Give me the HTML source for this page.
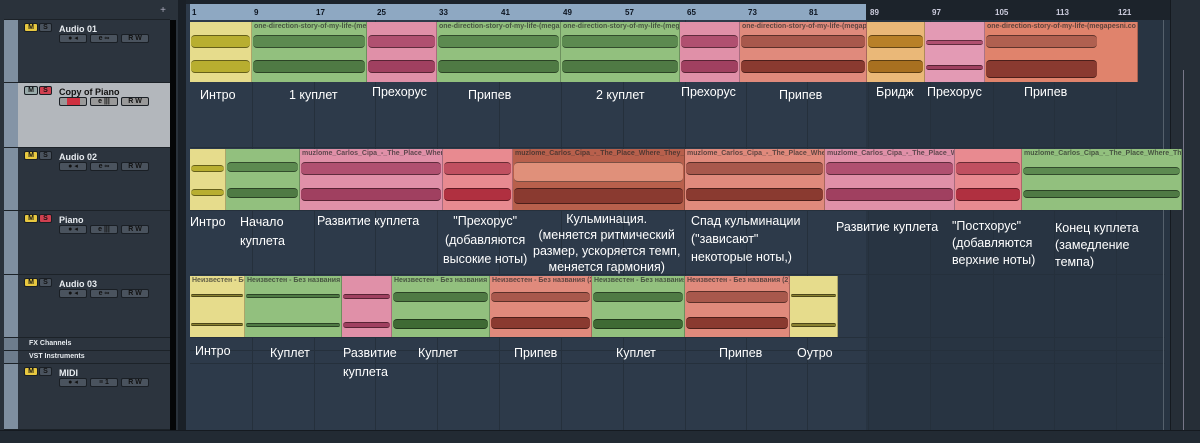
<!DOCTYPE html>
<html><head><meta charset="utf-8"><style>
*{margin:0;padding:0;box-sizing:border-box}
body{width:1200px;height:443px;overflow:hidden;background:#1f262e;font-family:"Liberation Sans","DejaVu Sans",sans-serif;position:relative}
.a{position:absolute}
#left{left:0;top:0;width:178px;height:443px;background:#2a323b}
.trk{position:absolute;left:4px;width:166px;border-bottom:1px solid #1c2228;background:#2c343e}
.num{position:absolute;left:0;top:0;width:14px;height:100%;background:#7f8fa0}
.tn{position:absolute;left:55px;top:4px;font-size:9px;font-weight:bold;color:#e8ecf0}
.btn{position:absolute;height:9px;background:#4a535e;border:1px solid #1a1f25;border-radius:2px;font-size:7px;font-weight:bold;color:#111;text-align:center;line-height:7px}
.meter{position:absolute;left:170px;width:6px;background:#050607}
#tl{left:186px;top:0;width:984px;height:430px;background:#2d3a4a}
.vl{position:absolute;top:20px;width:1px;height:410px;background:#25303c}
.hl{position:absolute;left:190px;width:975px;height:1px;background:#25303c}
.ruler{position:absolute;top:4px;height:16px}
.bn{position:absolute;top:8px;font-size:8px;font-weight:bold;color:#0c1420}
.clip{position:absolute;overflow:hidden;border-right:1px solid rgba(0,0,0,.25)}
.clip b{position:absolute;left:2px;top:1px;font-size:7px;font-weight:bold;white-space:nowrap;color:rgba(40,40,40,.7)}
.w{position:absolute;left:1px;right:1px;height:13px;border-radius:4px;border-top:1px solid rgba(0,0,0,.45);border-bottom:1px solid rgba(0,0,0,.45)}
.w1{top:22%}.w2{top:64%}
.t{position:absolute;color:#fff;font-size:12.5px;line-height:19px;white-space:nowrap;font-family:"Liberation Sans","DejaVu Sans",sans-serif}
</style></head><body>
<div id="left" class="a">
<div class="a" style="left:4px;top:4px;width:166px;height:16px;background:#2a323b;border-bottom:1px solid #1c2228"><span style="position:absolute;right:4px;top:1px;color:#aab;font-size:10px">+</span></div>
<div class="trk" style="top:20px;height:63px"><div class="num"></div><span class="tn">Audio 01</span>
<div class="btn" style="left:20px;top:3px;width:14px;background:#e8c840">M</div><div class="btn" style="left:35px;top:3px;width:13px">S</div>
<div class="btn" style="left:55px;top:14px;width:28px">● ◂</div><div class="btn" style="left:86px;top:14px;width:28px">e ∞</div><div class="btn" style="left:117px;top:14px;width:28px">R W</div></div>
<div class="trk" style="top:83px;height:65px;background:#b3b7bc"><div class="num" style="background:#8494a6"></div><span class="tn" style="color:#111">Copy of Piano</span>
<div class="btn" style="left:20px;top:3px;width:14px;background:#9aa">M</div><div class="btn" style="left:35px;top:3px;width:13px;background:#d04050">S</div>
<div class="btn" style="left:55px;top:14px;width:28px;background:#999"><span style="display:inline-block;width:13px;height:7px;background:#d03040"></span></div><div class="btn" style="left:86px;top:14px;width:28px;background:#999">e |||</div><div class="btn" style="left:117px;top:14px;width:28px;background:#999">R W</div></div>
<div class="trk" style="top:148px;height:63px"><div class="num"></div><span class="tn">Audio 02</span>
<div class="btn" style="left:20px;top:3px;width:14px;background:#e8c840">M</div><div class="btn" style="left:35px;top:3px;width:13px">S</div>
<div class="btn" style="left:55px;top:14px;width:28px">● ◂</div><div class="btn" style="left:86px;top:14px;width:28px">e ∞</div><div class="btn" style="left:117px;top:14px;width:28px">R W</div></div>
<div class="trk" style="top:211px;height:64px"><div class="num"></div><span class="tn">Piano</span>
<div class="btn" style="left:20px;top:3px;width:14px;background:#e8c840">M</div><div class="btn" style="left:35px;top:3px;width:13px;background:#d04050">S</div>
<div class="btn" style="left:55px;top:14px;width:28px">● ◂</div><div class="btn" style="left:86px;top:14px;width:28px">e |||</div><div class="btn" style="left:117px;top:14px;width:28px">R W</div></div>
<div class="trk" style="top:275px;height:63px"><div class="num"></div><span class="tn">Audio 03</span>
<div class="btn" style="left:20px;top:3px;width:14px;background:#e8c840">M</div><div class="btn" style="left:35px;top:3px;width:13px">S</div>
<div class="btn" style="left:55px;top:14px;width:28px">● ◂</div><div class="btn" style="left:86px;top:14px;width:28px">e ∞</div><div class="btn" style="left:117px;top:14px;width:28px">R W</div></div>
<div class="trk" style="top:338px;height:13px"><div class="num" style="background:#6d7c8c"></div><span class="tn" style="top:2px;left:25px;font-size:7px">FX Channels</span></div>
<div class="trk" style="top:351px;height:13px"><div class="num" style="background:#6d7c8c"></div><span class="tn" style="top:2px;left:25px;font-size:7px">VST Instruments</span></div>
<div class="trk" style="top:364px;height:66px"><div class="num"></div><span class="tn">MIDI</span>
<div class="btn" style="left:20px;top:3px;width:14px;background:#e8c840">M</div><div class="btn" style="left:35px;top:3px;width:13px">S</div>
<div class="btn" style="left:55px;top:14px;width:28px">● ◂</div><div class="btn" style="left:86px;top:14px;width:28px">≡ 1</div><div class="btn" style="left:117px;top:14px;width:28px">R W</div></div>
<div class="meter" style="top:20px;height:410px"></div>
</div>
<div class="a" style="left:178px;top:0;width:8px;height:443px;background:#1a2027"></div>
<div id="tl" class="a">
<div class="ruler" style="left:4px;width:676px;background:#8ea8c2"></div>
<div class="ruler" style="left:680px;width:304px;background:#1c232b"></div>
<div class="a" style="left:680px;top:20px;width:304px;height:410px;background:#283442"></div>
<div class="a" style="left:0;top:0;width:984px;height:4px;background:#1c232b"></div>
</div>
<div class="a" style="left:1170px;top:0;width:30px;height:443px;background:#262e37;border-left:1px solid #151a20"><div style="position:absolute;left:12px;top:70px;width:1px;height:360px;background:#778"></div></div>
<div class="a" style="left:0;top:430px;width:1200px;height:13px;background:#222a33;border-top:1px solid #151a20"></div>

<div class="hl" style="top:147px"></div><div class="hl" style="top:210px"></div><div class="hl" style="top:274px"></div><div class="hl" style="top:337px"></div><div class="hl" style="top:350px"></div><div class="hl" style="top:363px"></div>
<div class="vl a" style="left:252px"></div><div class="vl a" style="left:314px"></div><div class="vl a" style="left:375px"></div><div class="vl a" style="left:437px"></div><div class="vl a" style="left:499px"></div><div class="vl a" style="left:561px"></div><div class="vl a" style="left:623px"></div><div class="vl a" style="left:685px"></div><div class="vl a" style="left:746px"></div><div class="vl a" style="left:807px"></div><div class="vl a" style="left:868px"></div><div class="vl a" style="left:930px"></div><div class="vl a" style="left:993px"></div><div class="vl a" style="left:1054px"></div><div class="vl a" style="left:1116px"></div><div class="vl a" style="left:1163px;background:#55606c"></div>
<span class="bn" style="left:192px">1</span><span class="bn" style="left:254px">9</span><span class="bn" style="left:316px">17</span><span class="bn" style="left:377px">25</span><span class="bn" style="left:439px">33</span><span class="bn" style="left:501px">41</span><span class="bn" style="left:563px">49</span><span class="bn" style="left:625px">57</span><span class="bn" style="left:687px">65</span><span class="bn" style="left:748px">73</span><span class="bn" style="left:809px">81</span>
<span class="bn" style="left:870px;color:#ccd">89</span><span class="bn" style="left:932px;color:#ccd">97</span><span class="bn" style="left:995px;color:#ccd">105</span><span class="bn" style="left:1056px;color:#ccd">113</span><span class="bn" style="left:1118px;color:#ccd">121</span>
<!-- row1 -->
<div class="clip" style="left:190px;top:22px;width:62px;height:60px;background:#e6dc8c"><div class="w w1" style="background:#b8ae30"></div><div class="w w2" style="background:#b8ae30"></div></div>
<div class="clip" style="left:252px;top:22px;width:115px;height:60px;background:#92c07e"><b>one-direction-story-of-my-life-(me</b><div class="w w1" style="background:#5c8a50"></div><div class="w w2" style="background:#4f7a44"></div></div>
<div class="clip" style="left:367px;top:22px;width:70px;height:60px;background:#e090a8"><div class="w w1" style="background:#b05070"></div><div class="w w2" style="background:#a04060"></div></div>
<div class="clip" style="left:437px;top:22px;width:124px;height:60px;background:#92c07e"><b>one-direction-story-of-my-life-(mega</b><div class="w w1" style="background:#5c8a50"></div><div class="w w2" style="background:#4f7a44"></div></div>
<div class="clip" style="left:561px;top:22px;width:119px;height:60px;background:#92c07e"><b>one-direction-story-of-my-life-(mega</b><div class="w w1" style="background:#5c8a50"></div><div class="w w2" style="background:#4f7a44"></div></div>
<div class="clip" style="left:680px;top:22px;width:60px;height:60px;background:#e090a8"><div class="w w1" style="background:#b05070"></div><div class="w w2" style="background:#a04060"></div></div>
<div class="clip" style="left:740px;top:22px;width:127px;height:60px;background:#e08a7c"><b>one-direction-story-of-my-life-(megap</b><div class="w w1" style="background:#a8584c"></div><div class="w w2" style="background:#8a3a30"></div></div>
<div class="clip" style="left:867px;top:22px;width:58px;height:60px;background:#eab878"><div class="w w1" style="background:#b88028"></div><div class="w w2" style="background:#a87020"></div></div>
<div class="clip" style="left:925px;top:22px;width:60px;height:60px;background:#e39ab4"><div class="w w1" style="background:#b05070;height:5px;top:30%"></div><div class="w w2" style="background:#a04060;height:5px;top:72%"></div></div>
<div class="clip" style="left:985px;top:22px;width:153px;height:60px;background:#e0836c"><b>one-direction-story-of-my-life-(megapesni.co</b><div class="w w1" style="background:#b06050;right:40px"></div><div class="w w2" style="background:#8a3a30;right:40px;height:18px"></div></div>
<!-- row3 -->
<div class="clip" style="left:190px;top:149px;width:36px;height:61px;background:#e6dc8c"><div class="w w1" style="background:#b8ae30;height:7px;top:27%"></div><div class="w w2" style="background:#b8ae30;height:7px;top:66%"></div></div>
<div class="clip" style="left:226px;top:149px;width:74px;height:61px;background:#92c07e"><div class="w w1" style="background:#5c8a50;height:10px"></div><div class="w w2" style="background:#4f7a44;height:10px"></div></div>
<div class="clip" style="left:300px;top:149px;width:143px;height:61px;background:#e090a8"><b>muzlome_Carlos_Cipa_-_The_Place_Where_</b><div class="w w1" style="background:#b05070"></div><div class="w w2" style="background:#a04060"></div></div>
<div class="clip" style="left:443px;top:149px;width:70px;height:61px;background:#e88a90"><div class="w w1" style="background:#c05060"></div><div class="w w2" style="background:#b03040"></div></div>
<div class="clip" style="left:513px;top:149px;width:172px;height:61px;background:#b8604c"><b>muzlome_Carlos_Cipa_-_The_Place_Where_They_Go</b><div class="w w1" style="background:#e0907a;height:20px"></div><div class="w w2" style="background:#8a3a30;height:16px"></div></div>
<div class="clip" style="left:685px;top:149px;width:140px;height:61px;background:#e08a7c"><b>muzlome_Carlos_Cipa_-_The_Place_Wher</b><div class="w w1" style="background:#a8584c"></div><div class="w w2" style="background:#8a3a30"></div></div>
<div class="clip" style="left:825px;top:149px;width:130px;height:61px;background:#e090a8"><b>muzlome_Carlos_Cipa_-_The_Place_Whe</b><div class="w w1" style="background:#b05070"></div><div class="w w2" style="background:#a04060"></div></div>
<div class="clip" style="left:955px;top:149px;width:67px;height:61px;background:#e88a90"><div class="w w1" style="background:#c05060"></div><div class="w w2" style="background:#b03040"></div></div>
<div class="clip" style="left:1022px;top:149px;width:160px;height:61px;background:#92c07e"><b>muzlome_Carlos_Cipa_-_The_Place_Where_They_</b><div class="w w1" style="background:#5c8a50;height:8px;top:30%"></div><div class="w w2" style="background:#4f7a44;height:8px;top:68%"></div></div>
<!-- row5 -->
<div class="clip" style="left:190px;top:276px;width:55px;height:61px;background:#e6dc8c"><b>Неизвестен - Бе</b><div class="w w1" style="background:#8a8230;height:3px;top:30%"></div><div class="w w2" style="background:#8a8230;height:3px;top:77%"></div></div>
<div class="clip" style="left:245px;top:276px;width:97px;height:61px;background:#92c07e"><b>Неизвестен - Без названия (</b><div class="w w1" style="background:#4f7a44;height:4px;top:30%"></div><div class="w w2" style="background:#4f7a44;height:4px;top:77%"></div></div>
<div class="clip" style="left:342px;top:276px;width:50px;height:61px;background:#e090a8"><div class="w w1" style="background:#a04060;height:5px;top:30%"></div><div class="w w2" style="background:#a04060;height:6px;top:76%"></div></div>
<div class="clip" style="left:392px;top:276px;width:98px;height:61px;background:#92c07e"><b>Неизвестен - Без названия (</b><div class="w w1" style="background:#4f7a44;height:10px;top:27%"></div><div class="w w2" style="background:#3f6a34;height:10px;top:70%"></div></div>
<div class="clip" style="left:490px;top:276px;width:102px;height:61px;background:#e08a7c"><b>Неизвестен - Без названия (2)</b><div class="w w1" style="background:#a8584c;height:10px;top:27%"></div><div class="w w2" style="background:#8a3a30;height:12px;top:68%"></div></div>
<div class="clip" style="left:592px;top:276px;width:93px;height:61px;background:#92c07e"><b>Неизвестен - Без названия</b><div class="w w1" style="background:#4f7a44;height:10px;top:27%"></div><div class="w w2" style="background:#3f6a34;height:10px;top:70%"></div></div>
<div class="clip" style="left:685px;top:276px;width:105px;height:61px;background:#e08a7c"><b>Неизвестен - Без названия (2)</b><div class="w w1" style="background:#a8584c;height:12px;top:25%"></div><div class="w w2" style="background:#8a3a30;height:12px;top:68%"></div></div>
<div class="clip" style="left:790px;top:276px;width:48px;height:61px;background:#e6dc8c"><div class="w w1" style="background:#8a8230;height:3px;top:30%"></div><div class="w w2" style="background:#8a8230;height:4px;top:77%"></div></div>
<!-- annotations -->
<div class="t" style="left:200px;top:86px">Интро</div>
<div class="t" style="left:289px;top:86px">1 куплет</div>
<div class="t" style="left:372px;top:83px">Прехорус</div>
<div class="t" style="left:468px;top:86px">Припев</div>
<div class="t" style="left:596px;top:86px">2 куплет</div>
<div class="t" style="left:681px;top:83px">Прехорус</div>
<div class="t" style="left:779px;top:86px">Припев</div>
<div class="t" style="left:876px;top:83px">Бридж</div>
<div class="t" style="left:927px;top:83px">Прехорус</div>
<div class="t" style="left:1024px;top:83px">Припев</div>
<div class="t" style="left:190px;top:213px">Интро</div>
<div class="t" style="left:240px;top:213px">Начало<br>куплета</div>
<div class="t" style="left:317px;top:212px">Развитие куплета</div>
<div class="t" style="left:443px;top:212px;text-align:center">"Прехорус"<br>(добавляются<br>высокие ноты)</div>
<div class="t" style="left:533px;top:211px;text-align:center;line-height:16px">Кульминация.<br>(меняется ритмический<br>размер, ускоряется темп,<br>меняется гармония)</div>
<div class="t" style="left:691px;top:212px;line-height:18px">Спад кульминации<br>("зависают"<br>некоторые ноты,)</div>
<div class="t" style="left:836px;top:218px">Развитие куплета</div>
<div class="t" style="left:952px;top:218px;line-height:17px">"Постхорус"<br>(добавляются<br>верхние ноты)</div>
<div class="t" style="left:1055px;top:220px;line-height:17px">Конец куплета<br>(замедление<br>темпа)</div>
<div class="t" style="left:195px;top:342px">Интро</div>
<div class="t" style="left:270px;top:344px">Куплет</div>
<div class="t" style="left:343px;top:344px">Развитие<br>куплета</div>
<div class="t" style="left:418px;top:344px">Куплет</div>
<div class="t" style="left:514px;top:344px">Припев</div>
<div class="t" style="left:616px;top:344px">Куплет</div>
<div class="t" style="left:719px;top:344px">Припев</div>
<div class="t" style="left:797px;top:344px">Оутро</div>
</body></html>
